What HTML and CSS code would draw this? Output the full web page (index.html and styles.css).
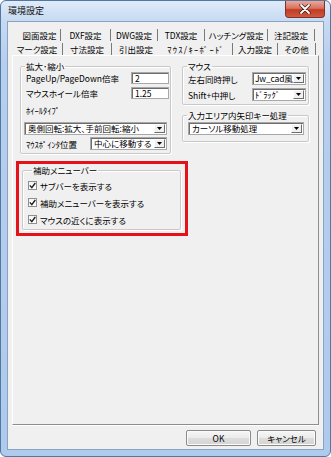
FILE: index.html
```html
<!DOCTYPE html>
<html lang="ja">
<head>
<meta charset="utf-8">
<title>環境設定</title>
<link rel="stylesheet" href="styles.css">
</head>
<body>
<div class="window">
  <div class="titlebar">
    <span class="title">環境設定</span>
    <span class="close">
      <svg width="12" height="10" viewBox="0 0 12 10"><path d="M2 1 L10 9 M10 1 L2 9" stroke="#3a1a1a" stroke-width="3.2" stroke-linecap="round"/><path d="M2 1 L10 9 M10 1 L2 9" stroke="#fff" stroke-width="1.8" stroke-linecap="round"/></svg>
    </span>
  </div>
  <div class="client">
    <div class="tabs">
      <div class="tabrow row1">
        <span class="tab">図面設定</span>
        <span class="tab">DXF設定</span>
        <span class="tab">DWG設定</span>
        <span class="tab">TDX設定</span>
        <span class="tab">ハッチング設定</span>
        <span class="tab">注記設定</span>
      </div>
      <div class="tabrow row2">
        <span class="tab">マーク設定</span>
        <span class="tab">寸法設定</span>
        <span class="tab">引出設定</span>
        <span class="tab active">ﾏｳｽ/ｷｰﾎﾞｰﾄﾞ</span>
        <span class="tab">入力設定</span>
        <span class="tab">その他</span>
      </div>
    </div>
    <div class="page">
      <div class="top">
        <fieldset class="group g-zoom">
          <legend>拡大･縮小</legend>
          <div class="row r1"><span class="lbl">PageUp/PageDown倍率</span><span class="edit">2</span></div>
          <div class="row r2"><span class="lbl">マウスホイール倍率</span><span class="edit">1.25</span></div>
          <div class="row r3"><span class="lbl">ﾎｲｰﾙﾀｲﾌﾟ</span></div>
          <div class="combo c-wheel"><span class="ctext">奥側回転:拡大、手前回転:縮小</span><span class="dd"><svg width="5" height="3" viewBox="0 0 5 3"><path d="M0 0H5L2.5 3Z" fill="#000"/></svg></span></div>
          <div class="row r5"><span class="lbl">ﾏｳｽﾎﾟｲﾝﾀ位置</span><div class="combo c-pos"><span class="ctext">中心に移動する</span><span class="dd"><svg width="5" height="3" viewBox="0 0 5 3"><path d="M0 0H5L2.5 3Z" fill="#000"/></svg></span></div></div>
        </fieldset>
        <div class="rightcol">
          <fieldset class="group g-mouse">
            <legend>マウス</legend>
            <div class="row m1"><span class="lbl">左右同時押し</span><div class="combo c-small"><span class="ctext">Jw_cad風</span><span class="dd"><svg width="5" height="3" viewBox="0 0 5 3"><path d="M0 0H5L2.5 3Z" fill="#000"/></svg></span></div></div>
            <div class="row m2"><span class="lbl">Shift+中押し</span><div class="combo c-small"><span class="ctext">ﾄﾞﾗｯｸﾞ</span><span class="dd"><svg width="5" height="3" viewBox="0 0 5 3"><path d="M0 0H5L2.5 3Z" fill="#000"/></svg></span></div></div>
          </fieldset>
          <fieldset class="group g-arrow">
            <legend>入力エリア内矢印キー処理</legend>
            <div class="combo c-arrow"><span class="ctext">カーソル移動処理</span><span class="dd"><svg width="5" height="3" viewBox="0 0 5 3"><path d="M0 0H5L2.5 3Z" fill="#000"/></svg></span></div>
          </fieldset>
        </div>
      </div>
      <div class="highlight">
        <fieldset class="group g-aux">
          <legend>補助メニューバー</legend>
          <div class="chk"><span class="box"><svg width="7" height="7" viewBox="0 0 7 7"><path d="M0.8 3.4 L2.8 5.6 L6.3 1" fill="none" stroke="#1e1e1e" stroke-width="1.4"/></svg></span>サブバーを表示する</div>
          <div class="chk"><span class="box"><svg width="7" height="7" viewBox="0 0 7 7"><path d="M0.8 3.4 L2.8 5.6 L6.3 1" fill="none" stroke="#1e1e1e" stroke-width="1.4"/></svg></span>補助メニューバーを表示する</div>
          <div class="chk"><span class="box"><svg width="7" height="7" viewBox="0 0 7 7"><path d="M0.8 3.4 L2.8 5.6 L6.3 1" fill="none" stroke="#1e1e1e" stroke-width="1.4"/></svg></span>マウスの近くに表示する</div>
        </fieldset>
      </div>
    </div>
    <div class="buttons">
      <span class="btn b-ok">OK</span>
      <span class="btn b-cancel">キャンセル</span>
    </div>
  </div>
</div>
</body>
</html>
```
FILE: styles.css
```css
* { box-sizing: border-box; }
html, body { margin: 0; padding: 0; }
body {
  width: 331px;
  height: 457px;
  overflow: hidden;
  background: #ffffff;
  font-family: "Noto Sans CJK JP", "Noto Sans", sans-serif;
  font-size: 8.5px;
  color: #000;
  font-feature-settings: "palt";
}
.window {
  width: 331px;
  height: 457px;
  display: flex;
  flex-direction: column;
  background: linear-gradient(#dfebf9, #c6daf2 20px, #b6cfee 60px, #aecaec);
  border: 1px solid #54779f;
  border-radius: 6px;
}
.titlebar {
  height: 20px;
  display: flex;
  align-items: center;
  padding-left: 7px;
}
.title { font-size: 9px; line-height: 10px; color: #101010; }
.close {
  margin-left: auto;
  margin-right: 5px;
  align-self: flex-start;
  width: 40px;
  height: 17px;
  display: flex;
  align-items: center;
  justify-content: center;
  background: linear-gradient(#eaa79b, #d8735f 45%, #c23a23 55%, #cf5a40);
  border: 1px solid #7e3229;
  border-top: none;
  border-radius: 0 0 4px 4px;
}
.client {
  flex: 1;
  margin: 0 6px 6px 6px;
  background: #f0f0f0;
  border: 1px solid #8aa3c3;
  padding: 6px 4px 3px 4px;
  display: flex;
  flex-direction: column;
}
.tabs { display: flex; flex-direction: column; }
.tabrow { display: flex; }
.row1 { height: 14px; margin-left: 7px; }
.row2 { height: 13px; }
.tab {
  display: flex;
  align-items: center;
  justify-content: center;
  height: 12px;
  align-self: center;
  border-right: 1px solid #7a7a7a;
  line-height: 10px;
  white-space: nowrap;
}
.tab.active { font-feature-settings: normal; letter-spacing: 1.3px; }
.row1 .tab:nth-child(1) { width: 42px; }
.row1 .tab:nth-child(2) { width: 50px; }
.row1 .tab:nth-child(3) { width: 47px; }
.row1 .tab:nth-child(4) { width: 47px; }
.row1 .tab:nth-child(5) { width: 63px; }
.row1 .tab:nth-child(6) { width: 47px; }
.row2 .tab:nth-child(1) { width: 51px; }
.row2 .tab:nth-child(2) { width: 49px; }
.row2 .tab:nth-child(3) { width: 48px; border-right: none; }
.row2 .tab:nth-child(4) { width: 73px; }
.row2 .tab:nth-child(5) { width: 45px; }
.row2 .tab:nth-child(6) { width: 38px; }
.page {
  height: 370px;
  border: 1px solid;
  border-color: #ffffff #8e8e8e #8e8e8e #ffffff;
  box-shadow: 0 1px 0 #ffffff;
  padding: 5px 0 0 0;
}
.top { display: flex; padding-left: 7px; align-items: flex-start; }
.group {
  margin: 0;
  padding: 0;
  min-width: 0;
  border: 1px solid #c9c9c9;
  border-radius: 2px;
  box-shadow: 1px 1px 0 #ffffff, inset 1px 1px 0 #ffffff;
}
.group legend {
  margin-left: 4px;
  padding: 0 1px;
  line-height: 10px;
  height: 10px;
  white-space: nowrap;
}
.row { display: flex; align-items: center; }
.lbl { line-height: 10px; white-space: nowrap; }
.g-zoom { width: 151px; padding-bottom: 3px; }
.g-zoom .row { padding-left: 5px; }
.g-zoom .r1 { height: 12px; margin-top: 1px; }
.g-zoom .r2 { height: 12px; margin-top: 3px; }
.g-zoom .r3 { height: 12px; margin-top: 5px; }
.edit {
  margin-left: auto;
  margin-right: 1px;
  width: 38px;
  height: 12px;
  background: #fff;
  border: 1px solid #a8a8a8;
  box-shadow: inset 1px 1px 0 #6d6d6d;
  padding-left: 3px;
  line-height: 10px;
}
.combo {
  display: flex;
  align-items: stretch;
  height: 13px;
  background: #fff;
  border: 1px solid #a8a8a8;
  box-shadow: inset 1px 1px 0 #6d6d6d;
}
.ctext { flex: 1; padding-left: 3px; line-height: 11px; white-space: nowrap; overflow: hidden; }
.dd {
  width: 11px;
  flex: none;
  margin: 1px 1px 1px 0;
  background: #f0f0f0;
  border: 1px solid;
  border-color: #ffffff #6d6d6d #6d6d6d #ffffff;
  display: flex;
  align-items: center;
  justify-content: center;
}
.c-wheel { width: 143px; margin-left: 3px; margin-top: 6px; }
.g-zoom .r5 { height: 13px; margin-top: 2px; }
.c-pos { width: 77px; margin-left: auto; margin-right: 3px; }
.rightcol { margin-left: 11px; width: 127px; display: flex; flex-direction: column; }
.g-mouse { padding-bottom: 3px; }
.g-mouse .row { padding-left: 5px; height: 13px; }
.g-mouse .m1 { margin-top: 1px; }
.g-mouse .m2 { margin-top: 3px; }
.c-small { width: 54px; margin-left: auto; margin-right: 2px; }
.c-small .ctext { padding-left: 2px; letter-spacing: -0.2px; }
.g-arrow { margin-top: 5px; padding-bottom: 6px; }
.c-arrow { width: 116px; margin-left: 5px; margin-top: 2px; }
.highlight {
  margin: 7px 0 0 3px;
  width: 172px;
  border: 3px solid #e5121b;
  padding: 1px 4px 3px 3px;
}
.g-aux { padding: 2px 0 1px 5px; }
.chk { display: flex; align-items: center; height: 17px; line-height: 10px; white-space: nowrap; }
.box {
  width: 9px;
  height: 9px;
  margin-right: 3px;
  border: 1px solid #8f8f8f;
  background: linear-gradient(#f4f4f4, #ffffff);
  display: flex;
  align-items: center;
  justify-content: center;
}
.buttons {
  display: flex;
  justify-content: flex-end;
  gap: 6px;
  margin-top: 5px;
  padding-right: 3px;
}
.btn {
  height: 16px;
  display: flex;
  align-items: center;
  justify-content: center;
  border: 1px solid #8a8a8a;
  border-radius: 2px;
  background: linear-gradient(#f6f6f6, #ebebeb 50%, #dddddd 51%, #d4d4d4);
  box-shadow: inset 0 0 0 1px #fbfbfb;
  line-height: 10px;
}
.b-ok { width: 65px; }
.b-cancel { width: 59px; }
```
